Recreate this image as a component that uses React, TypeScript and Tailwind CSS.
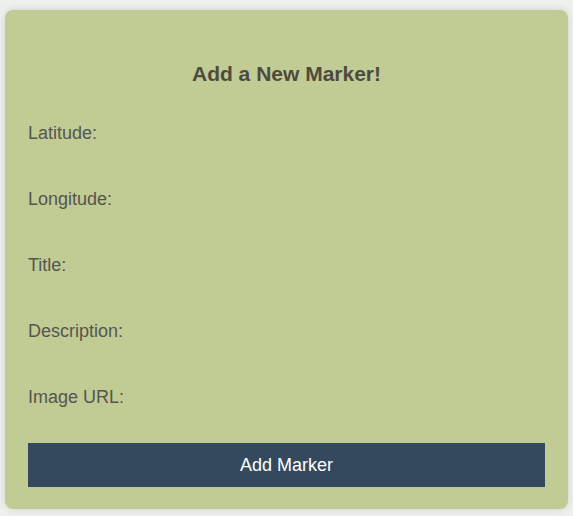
const fields = ["Latitude:", "Longitude:", "Title:", "Description:", "Image URL:"]

const App = () => {
  return (
    <div className="min-h-[516px] bg-[#eef0ec] px-[5px] pt-[10px] pb-[7px] font-['Liberation_Sans',Arial,sans-serif]">
      <div className="rounded-lg bg-[#c0cc94] px-[23px] pt-[52px] pb-[22px] shadow-[0_0_8px_rgba(0,0,0,0.12)]">
        <h2 className="text-center text-[21px] leading-[24px] font-bold text-[#4f4a3f]">Add a New Marker!</h2>
        <div className="mt-[37px] flex flex-col gap-[45px]">
          {fields.map((f) => (
            <label key={f} className="block text-[18px] leading-[21px] text-[#555550]">
              {f}
            </label>
          ))}
        </div>
        <button className="mt-[35px] block h-[44px] w-full bg-[#34495e] text-[18px] text-white">
          Add Marker
        </button>
      </div>
    </div>
  )
}

export default App
